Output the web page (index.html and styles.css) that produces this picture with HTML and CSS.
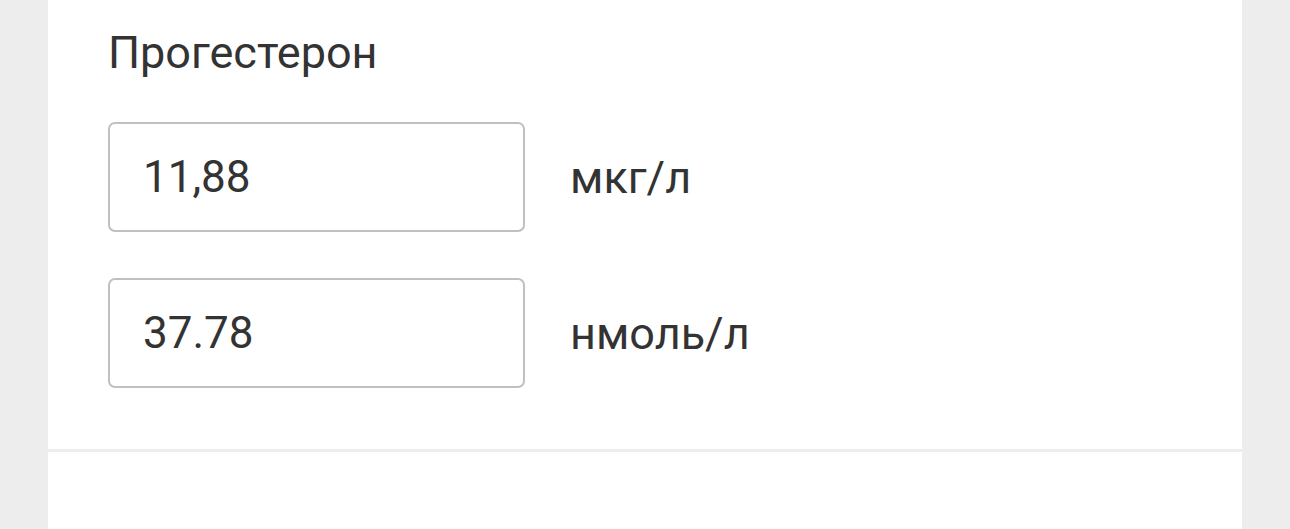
FILE: index.html
```html
<!DOCTYPE html>
<html lang="ru">
  <head>
    <meta charset="UTF-8" />
    <meta name="viewport" content="width=device-width, initial-scale=1.0" />
    <title>Прогестерон</title>
    <link rel="stylesheet" href="styles.css">
  </head>
  <body>
    <div class="page">
      <div class="card">
        <h2 class="title">Прогестерон</h2>
        <div class="row">
          <input class="value" type="text" value="11,88" />
          <span class="unit">мкг/л</span>
        </div>
        <div class="row">
          <input class="value" type="text" value="37.78" />
          <span class="unit">нмоль/л</span>
        </div>
      </div>
      <div class="card next"></div>
    </div>
  </body>
</html>
```
FILE: styles.css
```css
body {
  font-family: Roboto, "Noto Sans", sans-serif;
  background: #ededed;
  margin: 0;
  padding: 0;
  color: #333;
}

.page {
  margin: 0 48px;
}

.card {
  background: white;
  padding: 27px 60px 61px;
}

.title {
  font-size: 45px;
  font-weight: 400;
  margin: 0 0 43px;
  line-height: 52px;
}

.row {
  display: flex;
  align-items: center;
  gap: 45px;
  margin-bottom: 46px;
}

.row:last-child {
  margin-bottom: 0;
}

.value {
  width: 417px;
  height: 110px;
  box-sizing: border-box;
  border: 2px solid #c0c0c0;
  border-radius: 7px;
  padding: 0 33px;
  font-family: Roboto, sans-serif;
  font-size: 44px;
  color: #333;
  outline: none;
}

.unit {
  font-size: 45px;
}

.next {
  margin-top: 3px;
  padding: 0;
  height: 77px;
}
```
